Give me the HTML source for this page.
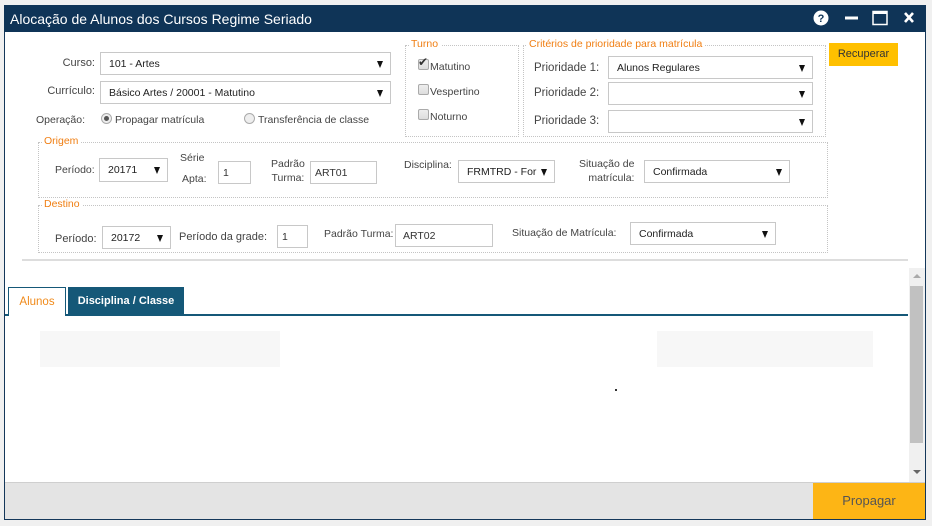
<!DOCTYPE html>
<html><head><meta charset="utf-8"><style>
*{box-sizing:border-box;margin:0;padding:0}
body{width:932px;height:526px;background:#f0f0f0;font-family:"Liberation Sans",sans-serif;font-size:11px;color:#333;position:relative;overflow:hidden}
.a{position:absolute;white-space:nowrap}
.win{position:absolute;left:4px;top:5px;width:922px;height:515px;background:#fff;border:1px solid #14375a}
.title{position:absolute;left:4px;top:5px;width:922px;height:27px;background:#0f3457;color:#fff;font-size:14px;padding:6px 0 0 6px}
.sel{position:absolute;border:1px solid #c8c8c8;background:#fff;color:#222;font-size:10.5px;padding-left:8px;display:flex;align-items:center;white-space:nowrap}
.sel:after{content:"";position:absolute;right:7px;top:50%;margin-top:-3px;border-left:3.5px solid transparent;border-right:3.5px solid transparent;border-top:7px solid #111}
.inp{position:absolute;border:1px solid #c8c8c8;background:#fff;color:#333;font-size:10.5px;padding-left:4px;display:flex;align-items:center}
.fs{position:absolute;border:1px dotted #c4c4c4}
.lg{position:absolute;background:#fff;color:#f07e12;font-size:10.5px;padding:0 3px 0 2px;top:-8px;left:3px;white-space:nowrap}
.lbl{color:#444;font-size:10.5px}
.cb{position:absolute;width:11px;height:11px;border:1px solid #aaa;border-radius:2px;background:linear-gradient(#eee,#ddd)}
.rd{position:absolute;width:11px;height:11px;border:1px solid #aaa;border-radius:50%;background:#eee}
</style></head><body>
<div class="win"></div>
<div class="title">Alocação de Alunos dos Cursos Regime Seriado</div>
<svg class="a" style="left:812px;top:9px" width="105" height="18">
<circle cx="9" cy="9" r="7.5" fill="#fff"/><text x="9" y="13" font-size="11" font-weight="bold" fill="#0f3457" text-anchor="middle" font-family="Liberation Sans">?</text>
<rect x="33" y="7.5" width="13" height="3" fill="#fff"/>
<rect x="61" y="2.5" width="14" height="13" fill="none" stroke="#fff" stroke-width="1.5"/><rect x="61" y="2" width="14" height="3" fill="#fff"/>
<path d="M93 4l8 9M101 4l-8 9" stroke="#fff" stroke-width="2.6"/>
</svg>

<div class="a lbl" style="right:837px;top:57px;font-size:11px">Curso:</div>
<div class="sel" style="left:100px;top:52px;width:291px;height:23px">101 - Artes</div>
<div class="a lbl" style="right:837px;top:85px;font-size:11px">Currículo:</div>
<div class="sel" style="left:100px;top:81px;width:291px;height:23px">Básico Artes / 20001 - Matutino</div>
<div class="a lbl" style="left:36px;top:114px">Operação:</div>
<div class="rd" style="left:101px;top:113px"><div style="width:5px;height:5px;border-radius:50%;background:#555;margin:2px"></div></div>
<div class="a lbl" style="left:115px;top:114px">Propagar matrícula</div>
<div class="rd" style="left:244px;top:113px"></div>
<div class="a lbl" style="left:258px;top:114px">Transferência de classe</div>

<div class="fs" style="left:405px;top:45px;width:114px;height:92px"><div class="lg">Turno</div></div>
<div class="cb" style="left:418px;top:59px"></div><div class="a" style="left:418px;top:55px;font-size:12px;color:#333">✔</div>
<div class="a lbl" style="left:430px;top:61px">Matutino</div>
<div class="cb" style="left:418px;top:84px"></div><div class="a lbl" style="left:430px;top:86px">Vespertino</div>
<div class="cb" style="left:418px;top:109px"></div><div class="a lbl" style="left:430px;top:111px">Noturno</div>

<div class="fs" style="left:523px;top:45px;width:303px;height:92px"><div class="lg">Critérios de prioridade para matrícula</div></div>
<div class="a lbl" style="left:534px;top:62px;font-size:11.5px">Prioridade 1:</div>
<div class="sel" style="left:608px;top:56px;width:205px;height:23px">Alunos Regulares</div>
<div class="a lbl" style="left:534px;top:87px;font-size:11.5px">Prioridade 2:</div>
<div class="sel" style="left:608px;top:82px;width:205px;height:23px"></div>
<div class="a lbl" style="left:534px;top:115px;font-size:11.5px">Prioridade 3:</div>
<div class="sel" style="left:608px;top:110px;width:205px;height:23px"></div>
<div class="a" style="left:829px;top:43px;width:69px;height:23px;background:#ffc000;color:#333;font-size:11px;text-align:center;line-height:23px">Recuperar</div>

<div class="fs" style="left:38px;top:142px;width:790px;height:56px"><div class="lg">Origem</div></div>
<div class="a lbl" style="left:55px;top:164px">Período:</div>
<div class="sel" style="left:99px;top:158px;width:69px;height:24px">20171</div>
<div class="a lbl" style="left:180px;top:152px;text-align:center">Série</div>
<div class="a lbl" style="left:182px;top:173px">Apta:</div>
<div class="inp" style="left:218px;top:161px;width:33px;height:23px">1</div>
<div class="a lbl" style="left:271px;top:157px;text-align:center;line-height:14px">Padrão<br>Turma:</div>
<div class="inp" style="left:310px;top:161px;width:67px;height:23px">ART01</div>
<div class="a lbl" style="left:404px;top:159px">Disciplina:</div>
<div class="sel" style="left:458px;top:160px;width:97px;height:23px;overflow:hidden;padding-right:18px">FRMTRD - For</div>
<div class="a lbl" style="left:579px;top:157px;text-align:right;line-height:14px">Situação de<br>matrícula:</div>
<div class="sel" style="left:644px;top:160px;width:146px;height:23px">Confirmada</div>

<div class="fs" style="left:38px;top:205px;width:790px;height:48px"><div class="lg">Destino</div></div>
<div class="a lbl" style="left:55px;top:233px;font-size:11px">Período:</div>
<div class="sel" style="left:102px;top:226px;width:69px;height:23px">20172</div>
<div class="a lbl" style="left:179px;top:231px;font-size:11px">Período da grade:</div>
<div class="inp" style="left:277px;top:225px;width:31px;height:23px">1</div>
<div class="a lbl" style="left:324px;top:228px">Padrão Turma:</div>
<div class="inp" style="left:395px;top:224px;width:98px;height:23px;padding-left:7px">ART02</div>
<div class="a lbl" style="left:512px;top:227px">Situação de Matrícula:</div>
<div class="sel" style="left:630px;top:222px;width:146px;height:23px">Confirmada</div>

<div class="a" style="left:22px;top:259px;width:886px;height:2px;background:#ddd"></div>

<div class="a" style="left:909px;top:268px;width:16px;height:214px;background:#f0f0f0"></div>
<div class="a" style="left:910px;top:286px;width:13px;height:157px;background:#c1c1c1"></div>
<div class="a" style="left:913px;top:274px;border-left:4px solid transparent;border-right:4px solid transparent;border-bottom:4px solid #aaa"></div>
<div class="a" style="left:913px;top:470px;border-left:4px solid transparent;border-right:4px solid transparent;border-top:4px solid #666"></div>

<div class="a" style="left:5px;top:314px;width:903px;height:2px;background:#155878"></div>
<div class="a" style="left:8px;top:287px;width:58px;height:29px;background:#fff;border:1px solid #155878;border-bottom:none;color:#f08a1a;font-size:11.5px;text-align:center;line-height:28px">Alunos</div>
<div class="a" style="left:68px;top:287px;width:116px;height:28px;background:#155878;color:#fff;font-size:11px;font-weight:bold;text-align:center;line-height:29px">Disciplina / Classe</div>

<div class="a" style="left:40px;top:331px;width:240px;height:36px;background:#f7f7f7"></div>
<div class="a" style="left:657px;top:331px;width:216px;height:36px;background:#f7f7f7"></div>
<div class="a" style="left:615px;top:389px;width:2px;height:2px;background:#333"></div>

<div class="a" style="left:5px;top:482px;width:920px;height:37px;background:#e4e4e4;border-top:1px solid #cfcfcf"></div>
<div class="a" style="left:813px;top:483px;width:112px;height:36px;background:#fdb515;color:#555;font-size:13px;text-align:center;line-height:36px">Propagar</div>
</body></html>
